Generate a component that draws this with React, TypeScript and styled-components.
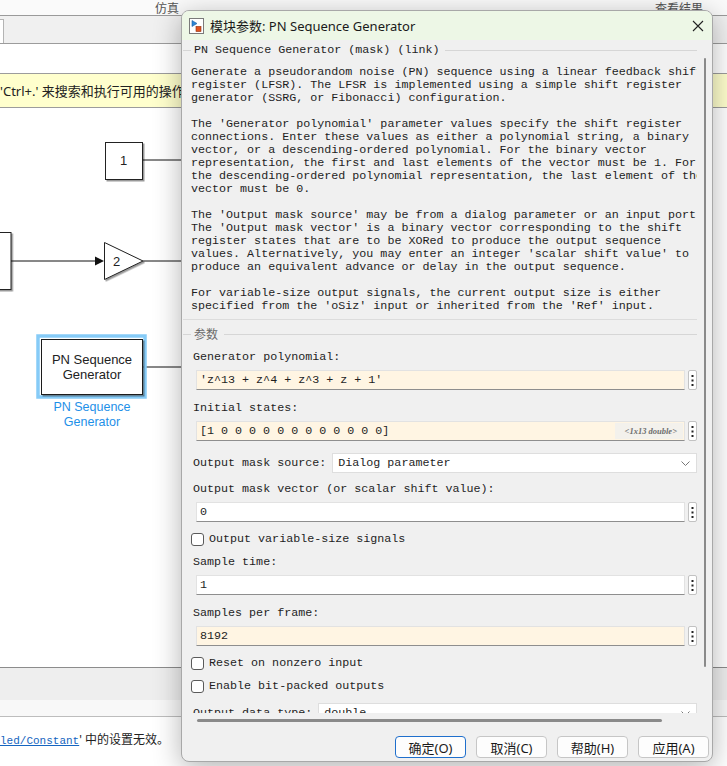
import styled, { createGlobalStyle } from 'styled-components'

const GlobalStyle = createGlobalStyle`
  html, body {
    margin: 0;
    padding: 0;
    width: 727px;
    height: 766px;
    overflow: hidden;
    background: #ffffff;
    font-family: "Noto Sans", "Noto Sans CJK SC", sans-serif;
  }
`

const MONO = `"Liberation Mono", "Noto Sans CJK SC", monospace`
const CJK = `"Noto Sans", "Noto Sans CJK SC", sans-serif`

const Screen = styled.div`
  position: relative;
  width: 727px;
  height: 766px;
  overflow: hidden;
`

const Window = styled.div`
  display: flex;
  flex-direction: column;
  width: 727px;
  height: 766px;
`

const TopStrip = styled.div`
  display: flex;
  align-items: center;
  gap: 476px;
  height: 15px;
  padding-left: 155px;
  background: #fafafa;
  border-bottom: 1px solid #9a9a9a;
  font-family: ${CJK};
  font-size: 12px;
  color: #555;
  overflow: hidden;
`

const TabStrip = styled.div`
  display: flex;
  align-items: flex-end;
  height: 27px;
  background: #f0f0f0;
  border-bottom: 1px solid #9c9c9c;
`

const Tab = styled.div`
  width: 3px;
  height: 23px;
  background: #fff;
  border: 1px solid #b4b4b4;
  border-left: none;
  border-bottom: none;
`

const WhiteRow = styled.div`
  height: 29px;
  background: #fff;
  border-bottom: 1px solid #9c9c9c;
`

const Banner = styled.div`
  display: flex;
  align-items: center;
  height: 33px;
  background: #ffffcd;
  border-bottom: 1px solid #9c9c9c;
  font-family: ${CJK};
  font-size: 13px;
  color: #222;
  white-space: nowrap;
`

const Canvas = styled.div`
  position: relative;
  height: 559px;
  background: #fff;
  border-bottom: 1px solid #8c8c8c;
`

const StatusBar = styled.div`
  height: 32px;
  background: #eeeeee;
`

const StatusStrip = styled.div`
  height: 16px;
  background: #f8f8f8;
  border-bottom: 1px solid #bdbdbd;
`

const Messages = styled.div`
  flex: 1;
  background: #fff;
  padding-top: 13px;
  font-family: ${CJK};
  font-size: 12px;
  color: #222;
  white-space: nowrap;
`

const MsgLink = styled.span`
  font-family: ${MONO};
  font-size: 11px;
  color: #1565c0;
  text-decoration: underline;
`

const Diagram = styled.svg`
  display: block;
  width: 727px;
  height: 559px;
  font-family: "Liberation Sans", Arial, sans-serif;
`

/* ---------- dialog ---------- */

const Dialog = styled.div`
  position: absolute;
  left: 181px;
  top: 10px;
  width: 532px;
  display: flex;
  flex-direction: column;
  box-sizing: border-box;
  border: 1px solid #a8a8a8;
  border-radius: 8px;
  overflow: hidden;
  background: #f0f0f0;
  box-shadow: 0 6px 28px rgba(0, 0, 0, 0.3);
`

const TitleBar = styled.div`
  display: flex;
  align-items: center;
  height: 29px;
  padding: 0 8px 0 7px;
  background: #edf7e6;
  font-family: ${CJK};
  font-size: 13px;
  color: #1a1a1a;
`

const TitleText = styled.span`
  flex: 1;
  margin-left: 6px;
`

const ScrollArea = styled.div`
  position: relative;
  height: 673px;
  overflow: hidden;
  padding-left: 1px;
`

const VScroll = styled.div`
  position: absolute;
  left: 522px;
  top: 18px;
  width: 2px;
  height: 609px;
  background: #8a8a8a;
  border-radius: 1px;
`

const Content = styled.div`
  width: 514px;
`

const GroupHead = styled.div<{ $mt: number; $muted?: boolean }>`
  display: flex;
  align-items: center;
  margin-top: ${p => p.$mt}px;
  height: 14px;
  font-family: ${p => (p.$muted ? CJK : MONO)};
  font-size: ${p => (p.$muted ? '12px' : '11.7px')};
  color: ${p => (p.$muted ? '#6a6a6a' : '#1e1e1e')};
  white-space: nowrap;

  &::before {
    content: '';
    width: 8px;
    height: 1px;
    margin-right: 3px;
    background: #d6d6d6;
  }

  &::after {
    content: '';
    flex: 1;
    height: 1px;
    margin-left: 6px;
    background: #d6d6d6;
  }
`

const Desc = styled.div`
  margin-top: 9px;
  padding-left: 8px;
  width: 506px;
  overflow: hidden;
  font-family: ${MONO};
  font-size: 11.7px;
  line-height: 13px;
  color: #1e1e1e;
  white-space: pre;
`

const Separator = styled.div`
  margin-top: 6px;
  height: 1px;
  background: #dcdcdc;
`

const Params = styled.div`
  display: flex;
  flex-direction: column;
  padding-left: 8px;
  font-family: ${MONO};
  font-size: 11.7px;
  color: #1e1e1e;
`

const Label = styled.div<{ $mt: number }>`
  margin-top: ${p => p.$mt}px;
  padding-left: 2px;
  height: 13px;
  line-height: 13px;
  white-space: nowrap;
`

const FieldRow = styled.div`
  display: flex;
  align-items: stretch;
  gap: 3px;
  margin-top: 6px;
  margin-left: 5px;
  height: 20px;
`

const Input = styled.div<{ $cream?: boolean }>`
  position: relative;
  display: flex;
  align-items: center;
  width: 489px;
  box-sizing: border-box;
  padding-left: 3px;
  background: ${p => (p.$cream ? '#fff5e3' : '#ffffff')};
  border: 1px solid #e2e2e2;
  border-bottom-color: #8e8e8e;
  white-space: nowrap;
`

const TypeHint = styled.span`
  position: absolute;
  right: 1px;
  top: 1px;
  bottom: 1px;
  display: flex;
  align-items: center;
  padding: 0 6px 0 10px;
  background: #f3f1ec;
  font-family: "Liberation Serif", serif;
  font-size: 8.5px;
  font-style: italic;
  font-weight: bold;
  color: #6e6e6e;
`

const DotsButton = styled.div`
  width: 9px;
  box-sizing: border-box;
  display: flex;
  align-items: center;
  justify-content: center;
  background: #fff;
  border: 1px solid #c2c2c2;
  border-radius: 2px;
`

const SelectRow = styled.div<{ $mt: number }>`
  display: flex;
  align-items: stretch;
  gap: 6px;
  margin-top: ${p => p.$mt}px;
  height: 20px;
  padding-left: 2px;
`

const SelectLabel = styled.span`
  display: flex;
  align-items: center;
  white-space: nowrap;
`

const Select = styled.div`
  flex: 1;
  display: flex;
  align-items: center;
  justify-content: space-between;
  padding: 0 6px 0 5px;
  background: #fff;
  border: 1px solid #dedede;
  white-space: nowrap;
`

const CheckRow = styled.div<{ $mt: number }>`
  display: flex;
  align-items: center;
  gap: 5px;
  margin-top: ${p => p.$mt}px;
  height: 14px;
  white-space: nowrap;
`

const CheckBox = styled.span`
  width: 13px;
  height: 13px;
  box-sizing: border-box;
  border: 1px solid #5a5a5a;
  border-radius: 3px;
  background: #fff;
`

const HScroll = styled.div`
  margin: 6px 0 0 15px;
  width: 465px;
  height: 3px;
  border-radius: 2px;
  background: #8a8a8a;
`

const ButtonRow = styled.div`
  display: flex;
  justify-content: flex-end;
  gap: 10px;
  margin-top: 14px;
  padding: 0 3px 3px 0;
`

const Button = styled.div<{ $primary?: boolean }>`
  width: 71px;
  height: 22px;
  box-sizing: border-box;
  display: flex;
  align-items: center;
  justify-content: center;
  border-radius: 4px;
  background: #fdfdfd;
  border: ${p => (p.$primary ? '1.5px solid #1f6fcc' : '1px solid #c6c6c6')};
  font-family: ${CJK};
  font-size: 13px;
  color: #1a1a1a;
`

const description = [
  'Generate a pseudorandom noise (PN) sequence using a linear feedback shift',
  'register (LFSR). The LFSR is implemented using a simple shift register',
  'generator (SSRG, or Fibonacci) configuration.',
  '',
  "The 'Generator polynomial' parameter values specify the shift register",
  'connections. Enter these values as either a polynomial string, a binary',
  'vector, or a descending-ordered polynomial. For the binary vector',
  'representation, the first and last elements of the vector must be 1. For',
  'the descending-ordered polynomial representation, the last element of the',
  'vector must be 0.',
  '',
  "The 'Output mask source' may be from a dialog parameter or an input port.",
  "The 'Output mask vector' is a binary vector corresponding to the shift",
  'register states that are to be XORed to produce the output sequence',
  "values. Alternatively, you may enter an integer 'scalar shift value' to",
  'produce an equivalent advance or delay in the output sequence.',
  '',
  'For variable-size output signals, the current output size is either',
  "specified from the 'oSiz' input or inherited from the 'Ref' input.",
].join('\n')

const Dots = () => (
  <svg width="3" height="11" viewBox="0 0 3 11">
    <rect x="0.5" y="0" width="2" height="2" fill="#222" />
    <rect x="0.5" y="4.5" width="2" height="2" fill="#222" />
    <rect x="0.5" y="9" width="2" height="2" fill="#222" />
  </svg>
)

const Chevron = () => (
  <svg width="9" height="5" viewBox="0 0 9 5">
    <path d="M0.5 0.5 L4.5 4.5 L8.5 0.5" fill="none" stroke="#777" strokeWidth="1" />
  </svg>
)

const BlockIcon = () => (
  <svg width="15" height="16" viewBox="0 0 15 16">
    <rect x="0.5" y="0.5" width="14" height="15" fill="#fff" stroke="#7a7a7a" />
    <path d="M3 2.5 L8 5.5 L3 8.5 Z" fill="#2d86d6" stroke="#1d5fa0" strokeWidth="0.6" />
    <rect x="7" y="8.5" width="5" height="5" fill="#e2531f" stroke="#8a2a0a" strokeWidth="0.6" />
  </svg>
)

const CloseIcon = () => (
  <svg width="12" height="12" viewBox="0 0 12 12">
    <path d="M1 1 L11 11 M11 1 L1 11" stroke="#222" strokeWidth="1.1" />
  </svg>
)

type FieldProps = { value: string; cream?: boolean; hint?: string }

const Field = ({ value, cream, hint }: FieldProps) => (
  <FieldRow>
    <Input $cream={cream}>
      {value}
      {hint && <TypeHint>{hint}</TypeHint>}
    </Input>
    <DotsButton>
      <Dots />
    </DotsButton>
  </FieldRow>
)

const Check = ({ label, mt }: { label: string; mt: number }) => (
  <CheckRow $mt={mt}>
    <CheckBox />
    {label}
  </CheckRow>
)

const BlockDiagram = () => (
  <Diagram viewBox="0 0 727 559">
    <defs>
      <filter id="sh" x="-20%" y="-20%" width="140%" height="140%">
        <feDropShadow dx="1.5" dy="1.5" stdDeviation="0.6" floodColor="#000" floodOpacity="0.4" />
      </filter>
    </defs>

    {/* constant 1 */}
    <line x1="142" y1="52" x2="200" y2="52" stroke="#111" strokeWidth="1" />
    <rect x="105.5" y="34.5" width="37" height="37" fill="#fff" stroke="#222" filter="url(#sh)" />
    <text x="123.5" y="57" fontSize="13" textAnchor="middle" fill="#222">1</text>

    {/* left block and gain */}
    <rect x="-10" y="124.5" width="21" height="57" fill="#fff" stroke="#222" filter="url(#sh)" />
    <line x1="11" y1="153" x2="97" y2="153" stroke="#111" strokeWidth="1" />
    <path d="M95 148.5 L104 153 L95 157.5 Z" fill="#111" />
    <line x1="143" y1="153" x2="200" y2="153" stroke="#111" strokeWidth="1" />
    <path d="M104.5 134.5 L143 153 L104.5 171.5 Z" fill="#fff" stroke="#222" filter="url(#sh)" />
    <text x="113" y="158" fontSize="13" fill="#222">2</text>

    {/* PN sequence generator, selected */}
    <line x1="143" y1="259" x2="200" y2="259" stroke="#111" strokeWidth="1" />
    <rect x="38" y="228" width="107" height="61" fill="none" stroke="#86cbf7" strokeWidth="3.5" />
    <rect x="41.5" y="231.5" width="101" height="55" fill="#fff" stroke="#1a1a1a" filter="url(#sh)" />
    <text x="92" y="256" fontSize="13" textAnchor="middle" fill="#222">PN Sequence</text>
    <text x="92" y="271" fontSize="13" textAnchor="middle" fill="#222">Generator</text>
    <text x="92" y="303" fontSize="12.5" textAnchor="middle" fill="#1e90e8">PN Sequence</text>
    <text x="92" y="318" fontSize="12.5" textAnchor="middle" fill="#1e90e8">Generator</text>
  </Diagram>
)

export default function App() {
  return (
    <>
      <GlobalStyle />
      <Screen>
        <Window>
          <TopStrip>
            <span>仿真</span>
            <span>查看结果</span>
          </TopStrip>
          <TabStrip>
            <Tab />
          </TabStrip>
          <WhiteRow />
          <Banner>'Ctrl+.' 来搜索和执行可用的操作</Banner>
          <Canvas>
            <BlockDiagram />
          </Canvas>
          <StatusBar />
          <StatusStrip />
          <Messages>
            <MsgLink>led/Constant</MsgLink>' 中的设置无效。
          </Messages>
        </Window>

        <Dialog>
          <TitleBar>
            <BlockIcon />
            <TitleText>模块参数: PN Sequence Generator</TitleText>
            <CloseIcon />
          </TitleBar>

          <ScrollArea>
            <Content>
              <GroupHead $mt={3}>PN Sequence Generator (mask) (link)</GroupHead>
              <Desc>{description}</Desc>
              <Separator />
              <GroupHead $mt={7} $muted>参数</GroupHead>
              <Params>
                <Label $mt={10}>Generator polynomial:</Label>
                <Field cream value="'z^13 + z^4 + z^3 + z + 1'" />
                <Label $mt={12}>Initial states:</Label>
                <Field cream value="[1 0 0 0 0 0 0 0 0 0 0 0 0]" hint="<1x13 double>" />
                <SelectRow $mt={12}>
                  <SelectLabel>Output mask source:</SelectLabel>
                  <Select>
                    Dialog parameter
                    <Chevron />
                  </Select>
                </SelectRow>
                <Label $mt={10}>Output mask vector (or scalar shift value):</Label>
                <Field value="0" />
                <Check mt={10} label="Output variable-size signals" />
                <Label $mt={10}>Sample time:</Label>
                <Field value="1" />
                <Label $mt={12}>Samples per frame:</Label>
                <Field cream value="8192" />
                <Check mt={10} label="Reset on nonzero input" />
                <Check mt={9} label="Enable bit-packed outputs" />
                <SelectRow $mt={10}>
                  <SelectLabel>Output data type:</SelectLabel>
                  <Select>
                    double
                    <Chevron />
                  </Select>
                </SelectRow>
              </Params>
            </Content>
            <VScroll />
          </ScrollArea>

          <HScroll />
          <ButtonRow>
            <Button $primary>确定(O)</Button>
            <Button>取消(C)</Button>
            <Button>帮助(H)</Button>
            <Button>应用(A)</Button>
          </ButtonRow>
        </Dialog>
      </Screen>
    </>
  )
}
